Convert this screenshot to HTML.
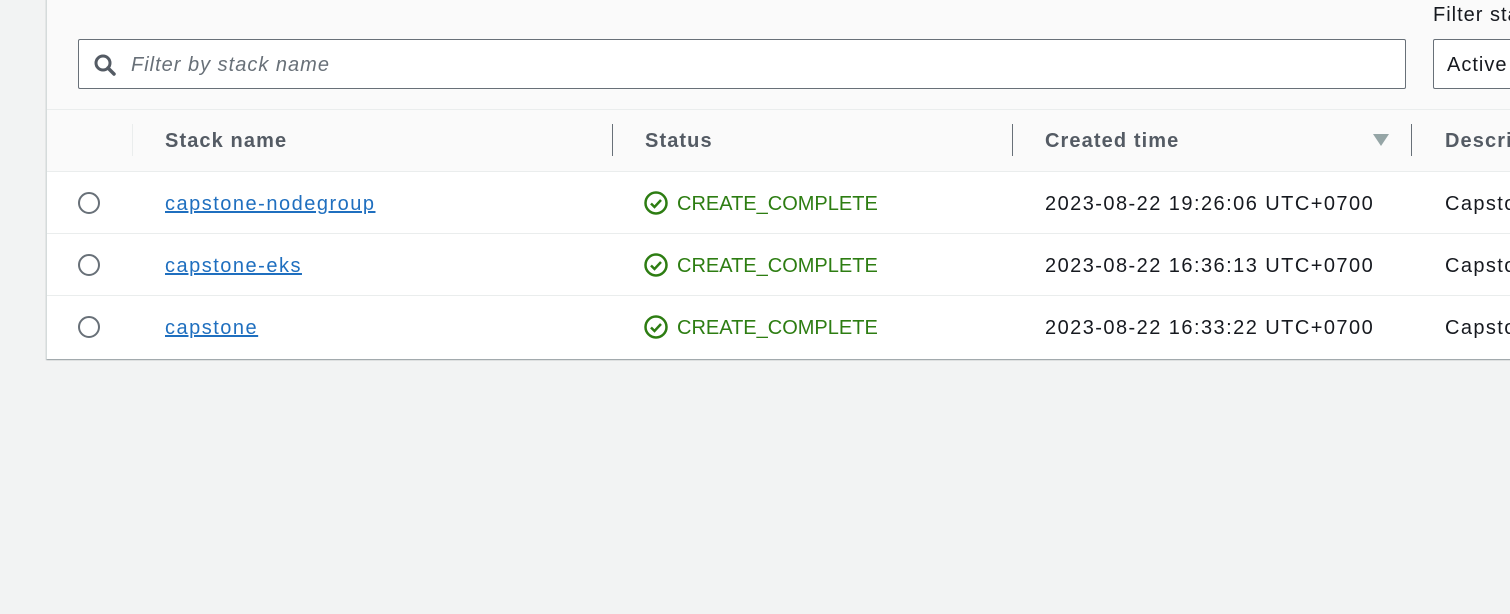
<!DOCTYPE html>
<html><head><meta charset="utf-8"><style>
*{margin:0;padding:0;box-sizing:border-box}
body{width:1510px;height:614px;background:#f2f3f3;font-family:"Liberation Sans",Arial,sans-serif;position:relative;overflow:hidden;color:#16191f}
.card{position:absolute;left:46px;top:-2px;width:1470px;height:361px;background:#fff;border-left:1px solid #d5dbdb;box-shadow:0 1px 1px rgba(0,28,36,.3),1px 1px 1px rgba(0,28,36,.15);overflow:hidden}
.top{position:absolute;left:0;top:0;width:100%;height:112px;background:#fafafa;border-bottom:1px solid #eaeded}
.search{position:absolute;left:31px;top:41px;width:1328px;height:50px;border:1px solid #687078;border-radius:2px;background:#fff}
.search span{position:absolute;left:52px;top:14px;font-size:20px;font-style:italic;color:#687078;letter-spacing:1px}
.lbl{position:absolute;left:1386px;top:6px;font-size:20px;white-space:nowrap;letter-spacing:1px}
.sel{position:absolute;left:1386px;top:41px;width:120px;height:50px;border:1px solid #687078;border-radius:2px;background:#fff;font-size:20px;padding:14px 0 0 13px;letter-spacing:1px}
.hdr{position:absolute;left:0;top:112px;width:100%;height:62px;background:#fafafa;border-bottom:1px solid #eaeded}
.hdr b{position:absolute;top:20px;font-size:20px;color:#545b64;letter-spacing:1.1px;white-space:nowrap}
.sep{position:absolute;top:14px;width:1px;height:32px;background:#687078}
.row{position:absolute;left:0;width:100%;height:62px;border-bottom:1px solid #eaeded;font-size:20px;white-space:nowrap}
.row .r{position:absolute;left:31px;top:20px;width:22px;height:22px;border:2px solid #687078;border-radius:50%}
.row a{position:absolute;left:118px;top:21px;color:#1f6fbf;text-decoration:underline;letter-spacing:1.5px}
.row .st{position:absolute;left:597px;top:21px;color:#2d7d12}
.row .st svg{position:absolute;left:0;top:-2px}
.row .st span{margin-left:33px}
.row .t{position:absolute;left:998px;top:21px;letter-spacing:1.45px}
.row .d{position:absolute;left:1398px;top:21px;letter-spacing:1.4px}
</style></head><body>
<div class="card">
<div class="top">
<div class="search">
<svg style="position:absolute;left:14px;top:13px" width="24" height="24" viewBox="0 0 24 24"><circle cx="10" cy="10" r="7" fill="none" stroke="#545b64" stroke-width="3"/><line x1="15" y1="15" x2="21" y2="21" stroke="#545b64" stroke-width="3.5" stroke-linecap="round"/></svg>
<span>Filter by stack name</span></div>
<div class="lbl">Filter status</div>
<div class="sel">Active</div>
</div>
<div class="hdr">
<div class="sep" style="left:85px;background:#eaeded"></div>
<b style="left:118px">Stack name</b>
<div class="sep" style="left:565px"></div>
<b style="left:598px">Status</b>
<div class="sep" style="left:965px"></div>
<b style="left:998px">Created time</b>
<svg style="position:absolute;left:1326px;top:24px" width="16" height="12" viewBox="0 0 16 12"><path d="M0 0H16L8 12Z" fill="#95a5a6"/></svg>
<div class="sep" style="left:1364px"></div>
<b style="left:1398px">Description</b>
</div>
<div class="row" style="top:174px"><div class="r"></div><a>capstone-nodegroup</a><div class="st"><svg width="26" height="26" viewBox="0 0 26 26"><circle cx="12" cy="12" r="10.5" fill="none" stroke="#2d7d12" stroke-width="2.5"/><path d="M7 12.5l3.5 3.5 6.5-7" fill="none" stroke="#2d7d12" stroke-width="2.5"/></svg><span>CREATE_COMPLETE</span></div><div class="t">2023-08-22 19:26:06 UTC+0700</div><div class="d">Capstone</div></div>
<div class="row" style="top:236px"><div class="r"></div><a>capstone-eks</a><div class="st"><svg width="26" height="26" viewBox="0 0 26 26"><circle cx="12" cy="12" r="10.5" fill="none" stroke="#2d7d12" stroke-width="2.5"/><path d="M7 12.5l3.5 3.5 6.5-7" fill="none" stroke="#2d7d12" stroke-width="2.5"/></svg><span>CREATE_COMPLETE</span></div><div class="t">2023-08-22 16:36:13 UTC+0700</div><div class="d">Capstone</div></div>
<div class="row" style="top:298px;border-bottom:none"><div class="r"></div><a>capstone</a><div class="st"><svg width="26" height="26" viewBox="0 0 26 26"><circle cx="12" cy="12" r="10.5" fill="none" stroke="#2d7d12" stroke-width="2.5"/><path d="M7 12.5l3.5 3.5 6.5-7" fill="none" stroke="#2d7d12" stroke-width="2.5"/></svg><span>CREATE_COMPLETE</span></div><div class="t">2023-08-22 16:33:22 UTC+0700</div><div class="d">Capstone</div></div>
</div>
</body></html>
